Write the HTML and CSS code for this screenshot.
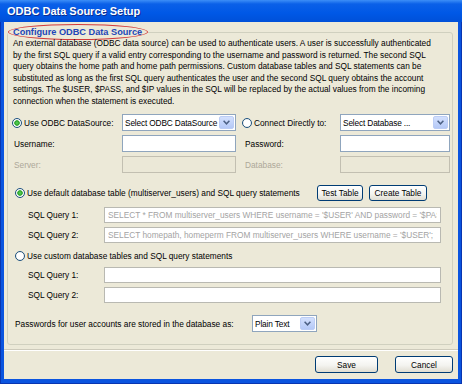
FILE: index.html
```html
<!DOCTYPE html>
<html lang="en">
<head>
  <meta charset="UTF-8" />
  <title>ODBC Data Source Setup</title>
  <link rel="stylesheet" href="styles.css">
</head>
<body>

  <div class="window">
    <div class="titlebar">ODBC Data Source Setup</div>

    <div class="client">
      <fieldset class="group">
        <legend class="group-title">Configure ODBC Data Source</legend>

        <p class="intro">
          An external database (ODBC data source) can be used to authenticate users. A user is successfully authenticated<br>
          by the first SQL query if a valid entry corresponding to the username and password is returned. The second SQL<br>
          query obtains the home path and home path permissions. Custom database tables and SQL statements can be<br>
          substituted as long as the first SQL query authenticates the user and the second SQL query obtains the account<br>
          settings. The $USER, $PASS, and $IP values in the SQL will be replaced by the actual values from the incoming<br>
          connection when the statement is executed.
        </p>

        <!-- data source -->
        <div class="source-grid">
          <label class="radio-label col-left"><input class="radio" type="radio" name="source" checked>Use ODBC DataSource:</label>
          <div class="combo">
            <span class="combo-text">Select ODBC DataSource</span>
            <span class="combo-btn"><svg width="7" height="5" viewBox="0 0 7 5"><path d="M0.6 0.8 L3.5 3.8 L6.4 0.8" fill="none" stroke="#4d6185" stroke-width="1.5"/></svg></span>
          </div>
          <label class="radio-label col-right"><input class="radio" type="radio" name="source">Connect Directly to:</label>
          <div class="combo">
            <span class="combo-text">Select Database ...</span>
            <span class="combo-btn"><svg width="7" height="5" viewBox="0 0 7 5"><path d="M0.6 0.8 L3.5 3.8 L6.4 0.8" fill="none" stroke="#4d6185" stroke-width="1.5"/></svg></span>
          </div>

          <span class="field-label">Username:</span>
          <input class="text-box" type="text">
          <span class="field-label right">Password:</span>
          <input class="text-box" type="password">

          <span class="field-label disabled">Server:</span>
          <input class="text-box" type="text" disabled>
          <span class="field-label right disabled">Database:</span>
          <input class="text-box" type="text" disabled>
        </div>

        <!-- default tables -->
        <div class="option-row first">
          <label class="radio-label option-label"><input class="radio" type="radio" name="tables" checked>Use default database table (multiserver_users) and SQL query statements</label>
          <button class="win-btn test-btn">Test Table</button>
          <button class="win-btn create-btn">Create Table</button>
        </div>
        <div class="query-grid first">
          <span class="field-label">SQL Query 1:</span>
          <input class="text-box query" type="text" readonly value="SELECT * FROM multiserver_users WHERE username = '$USER' AND password = '$PASS'">
          <span class="field-label">SQL Query 2:</span>
          <input class="text-box query" type="text" readonly value="SELECT homepath, homeperm FROM multiserver_users WHERE username = '$USER';">
        </div>

        <!-- custom tables -->
        <div class="option-row second">
          <label class="radio-label"><input class="radio" type="radio" name="tables">Use custom database tables and SQL query statements</label>
        </div>
        <div class="query-grid second">
          <span class="field-label">SQL Query 1:</span>
          <input class="text-box query" type="text">
          <span class="field-label">SQL Query 2:</span>
          <input class="text-box query" type="text">
        </div>

        <div class="storage-row">
          <span class="storage-label">Passwords for user accounts are stored in the database as:</span>
          <div class="combo plain">
            <span class="combo-text">Plain Text</span>
            <span class="combo-btn"><svg width="7" height="5" viewBox="0 0 7 5"><path d="M0.6 0.8 L3.5 3.8 L6.4 0.8" fill="none" stroke="#4d6185" stroke-width="1.5"/></svg></span>
          </div>
        </div>
      </fieldset>

      <div class="separator"></div>

      <div class="dialog-buttons">
        <button class="win-btn save-btn">Save</button>
        <button class="win-btn cancel-btn">Cancel</button>
      </div>
    </div>
  </div>

</body>
</html>
```

FILE: styles.css
```css
* {
  box-sizing: border-box;
}

body {
  margin: 0;
  font-family: "Liberation Sans", Arial, sans-serif;
  font-size: 8.3px;
  color: #000;
  background: #fff;
}

.window {
  width: 462px;
  height: 384px;
  display: flex;
  flex-direction: column;
  background: #0a54df;
  box-shadow: inset 0 0 0 1px #0835b0;
}

.titlebar {
  height: 22px;
  line-height: 22px;
  padding-left: 7px;
  color: #fff;
  font-size: 11px;
  font-weight: bold;
  background: linear-gradient(#3d8ef7, #0b60e8 4px, #0058e6 60%, #0050d8);
  text-shadow: 1px 1px 0 #0b2d8f;
}

.client {
  flex: 1;
  display: flex;
  flex-direction: column;
  margin: 0 4px 5px;
  background: #ece9d8;
}

/* group box */
.group {
  margin: 2px 5px 0 3px;
  padding: 0 0 12px;
  min-width: 0;
  border: 1px solid #d0d0bf;
  border-radius: 3px;
}

.group-title {
  padding: 0 5px 0 4px;
  height: 16px;
  line-height: 14px;
  border: 1px solid #d23a3a;
  border-radius: 50%;
  color: #2146b8;
  font-size: 9.2px;
  font-weight: bold;
}

.intro {
  margin: -2px 0 0;
  padding-left: 5px;
  line-height: 11.5px;
  white-space: nowrap;
}

.source-grid {
  display: grid;
  grid-template-columns: 108px 114px 104px 110px;
  grid-auto-rows: 17px;
  row-gap: 4px;
  align-items: center;
  margin-top: 7px;
  padding-left: 6px;
}

.radio-label {
  display: flex;
  align-items: center;
  gap: 2px;
  white-space: nowrap;
}

.radio-label.col-left {
  margin-left: -2px;
}

.radio-label.col-right {
  margin-left: 6px;
}

.radio {
  -webkit-appearance: none;
  appearance: none;
  flex: none;
  margin: 0;
  width: 10px;
  height: 10px;
  border: 1px solid #1c5180;
  border-radius: 50%;
  background: radial-gradient(circle, #fff 0, #fff 3px, #e2e1d8 5px);
}

.radio:checked {
  background: radial-gradient(circle, #62d45e 0, #27a127 2.4px, #fff 3.1px, #fff 3.4px, #e2e1d8 5px);
}

.field-label {
  white-space: nowrap;
}

.field-label.right {
  padding-left: 9px;
}

.field-label.disabled {
  color: #aca899;
}

.text-box {
  width: 100%;
  height: 17px;
  margin: 0;
  padding: 0 3px;
  font: inherit;
  color: #000;
  background: #fff;
  border: 1px solid #8fa5bd;
  outline: none;
}

.text-box:disabled {
  background: #ebe8d7;
  border-color: #c2bfb1;
}

.text-box.query {
  height: 16px;
  color: #a3a3a3;
  border-color: #b9b9b2;
}

.combo {
  display: flex;
  align-items: center;
  height: 17px;
  padding: 1px;
  background: #fff;
  border: 1px solid #8fa5bd;
  white-space: nowrap;
}

.combo-text {
  flex: 1;
  padding-left: 1px;
  overflow: hidden;
  letter-spacing: -0.15px;
}

.combo-btn {
  display: flex;
  align-items: center;
  justify-content: center;
  flex: none;
  width: 15px;
  height: 100%;
  background: linear-gradient(#d3e0fd, #b5c9f7);
  border: 1px solid #bccdf5;
  border-radius: 2px;
}

.combo.plain {
  width: 65px;
}

/* table options */
.option-row {
  display: flex;
  align-items: center;
  height: 16px;
  padding-left: 7px;
}

.option-row.first {
  margin-top: 12px;
}

.option-row.second {
  margin-top: 5px;
}

.option-label {
  width: 298px;
}

.query-grid {
  display: grid;
  grid-template-columns: 76px 337px;
  grid-auto-rows: 16px;
  row-gap: 4px;
  align-items: center;
  padding-left: 20px;
}

.query-grid.first {
  margin-top: 6px;
}

.query-grid.second {
  margin-top: 3px;
}

.storage-row {
  display: flex;
  align-items: center;
  gap: 7px;
  height: 17px;
  margin-top: 12px;
  padding-left: 7px;
  white-space: nowrap;
}

.storage-label {
  width: 230px;
}

/* buttons */
.win-btn {
  height: 16px;
  margin: 0 0 0 4px;
  padding: 0;
  font: inherit;
  color: #000;
  border: 1px solid #003c74;
  border-radius: 3px;
  background: linear-gradient(#fff, #f4f4f0 55%, #e0ddd2);
}

.test-btn {
  width: 46px;
}

.create-btn {
  width: 58px;
  margin-left: 6px;
}

.separator {
  margin-top: 4px;
  border-top: 1px solid #cdcabb;
  border-bottom: 1px solid #fff;
}

.dialog-buttons {
  display: flex;
  justify-content: flex-end;
  gap: 17px;
  margin-top: 5px;
  padding-right: 5px;
}

.dialog-buttons .win-btn {
  height: 17px;
  margin: 0;
}

.save-btn {
  width: 63px;
}

.cancel-btn {
  width: 58px;
}
```
